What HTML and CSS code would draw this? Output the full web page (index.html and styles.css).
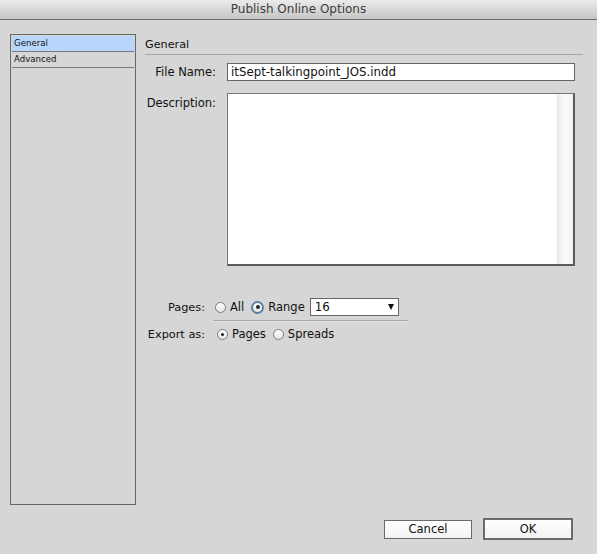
FILE: index.html
```html
<!DOCTYPE html>
<html>
<head>
<meta charset="utf-8">
<link rel="stylesheet" href="styles.css">
</head>
<body>
<div class="window">
  <div class="titlebar">Publish Online Options</div>
  <div class="main">
    <div class="sidebar">
      <div class="item selected">General</div>
      <div class="item">Advanced</div>
    </div>
    <div class="content">
      <div class="section-head">General</div>
      <div class="row row-file">
        <label class="lbl">File Name:</label>
        <div class="textfield">itSept-talkingpoint_JOS.indd</div>
      </div>
      <div class="row row-desc">
        <label class="lbl">Description:</label>
        <div class="textarea"><div class="scroll"></div></div>
      </div>
      <div class="row row-pages">
        <label class="lbl2">Pages:</label>
        <span class="radio"></span><span class="rtext">All</span>
        <span class="radio on focus"></span><span class="rtext">Range</span>
        <div class="select"><span>16</span><span class="arrow"></span></div>
      </div>
      <div class="divider"></div>
      <div class="row row-export">
        <label class="lbl2">Export as:</label>
        <span class="radio on"></span><span class="rtext">Pages</span>
        <span class="radio"></span><span class="rtext">Spreads</span>
      </div>
    </div>
  </div>
  <div class="footer">
    <button class="btn">Cancel</button>
    <button class="btn default">OK</button>
  </div>
</div>
</body>
</html>
```
FILE: styles.css
```css
html, body {
  margin: 0;
  padding: 0;
  background: #d6d6d6;
}
.window {
  width: 597px;
  height: 554px;
  display: flex;
  flex-direction: column;
  font-family: "DejaVu Sans", "Liberation Sans", sans-serif;
  font-size: 11.5px;
  color: #111;
}
.titlebar {
  height: 19px;
  border-bottom: 1px solid #6f6f6f;
  background: linear-gradient(#ebebeb, #d4d4d4 60%, #c6c6c6);
  text-align: center;
  line-height: 19px;
  font-size: 12px;
  color: #3d3d3d;
}
.main {
  height: 485px;
  box-sizing: border-box;
  padding: 14px 0 0 10px;
  display: flex;
  gap: 9px;
}
.sidebar {
  width: 126px;
  height: 471px;
  box-sizing: border-box;
  border: 1px solid #666;
  padding: 1px 1px 0 1px;
  background: #d6d6d6;
}
.item {
  height: 15px;
  line-height: 15px;
  border-bottom: 1px solid #7a7a7a;
  font-size: 8.6px;
  padding-left: 2px;
  color: #111;
}
.item.selected {
  background: #b8d6fc;
}
.content {
  width: 438px;
  display: flex;
  flex-direction: column;
}
.section-head {
  height: 20px;
  line-height: 22px;
  border-bottom: 1px solid #a4a4a4;
  font-size: 11.2px;
  color: #111;
}
.row {
  display: flex;
  align-items: center;
}
.lbl {
  width: 71px;
  text-align: right;
  margin-right: 11px;
  white-space: nowrap;
}
.row-file {
  margin-top: 8px;
}
.textfield {
  width: 348px;
  height: 18px;
  box-sizing: border-box;
  border: 1px solid #666;
  background: #fff;
  line-height: 16px;
  padding-left: 3px;
  font-size: 11.8px;
}
.row-desc {
  margin-top: 12px;
  align-items: flex-start;
}
.row-desc .lbl {
  margin-top: 3px;
}
.textarea {
  width: 348px;
  height: 173px;
  box-sizing: border-box;
  border: 1px solid #777;
  border-right: 2px solid #5a5a5a;
  border-bottom: 2px solid #5a5a5a;
  background: #fff;
  display: flex;
  justify-content: flex-end;
}
.scroll {
  width: 15px;
  height: 100%;
  background: linear-gradient(90deg, #eeeeee, #fafafa 50%, #f0f0f0);
  border-left: 1px solid #e4e4e4;
}
.lbl2 {
  width: 60px;
  flex: none;
  text-align: right;
  margin-right: 10px;
  white-space: nowrap;
  font-size: 11.3px;
}
.row-pages {
  margin-top: 32px;
  height: 18px;
}
.radio {
  width: 11px;
  height: 11px;
  box-sizing: border-box;
  border-radius: 50%;
  border: 1px solid #7c7c7c;
  background: linear-gradient(#ffffff, #e6e6e6);
  position: relative;
  margin-right: 4px;
  flex: none;
}
.radio.on::after {
  content: "";
  position: absolute;
  left: 3px;
  top: 3px;
  width: 3px;
  height: 3px;
  border-radius: 50%;
  background: #222;
}
.radio.focus {
  border: 2px solid #5b7fa6;
  width: 13px;
  height: 13px;
}
.radio.focus::after {
  left: 2.5px;
  top: 2.5px;
  width: 4px;
  height: 4px;
}
.rtext {
  margin-right: 7px;
}
.row-export .radio {
  margin-left: 2px;
}
.row-export .rtext {
  margin-right: 5px;
}
.select {
  width: 89px;
  height: 18px;
  box-sizing: border-box;
  border: 1px solid #666;
  background: #fff;
  display: flex;
  align-items: center;
  justify-content: space-between;
  padding: 0 4px 0 4px;
  margin-left: -2px;
  font-size: 11.8px;
}
.arrow {
  width: 0;
  height: 0;
  border-left: 3.5px solid transparent;
  border-right: 3.5px solid transparent;
  border-top: 6px solid #111;
}
.divider {
  margin-top: 4px;
  margin-left: 68px;
  width: 195px;
  height: 0;
  border-top: 1px solid #a8a8a8;
  border-bottom: 1px solid #e4e4e4;
}
.row-export {
  margin-top: 4px;
  height: 16px;
}
.footer {
  display: flex;
  justify-content: flex-end;
  align-items: center;
  padding: 13px 24px 0 0;
  gap: 11px;
}
.btn {
  font-family: "DejaVu Sans", "Liberation Sans", sans-serif;
  font-size: 11.5px;
  color: #111;
  background: linear-gradient(#ffffff, #f2f2f2);
  border: 1px solid #6a6a6a;
  width: 88px;
  height: 19px;
  padding: 0;
  margin: 0;
  border-radius: 0;
}
.btn.default {
  width: 90px;
  height: 22px;
  border: 2px solid #6a6a6a;
}
```
